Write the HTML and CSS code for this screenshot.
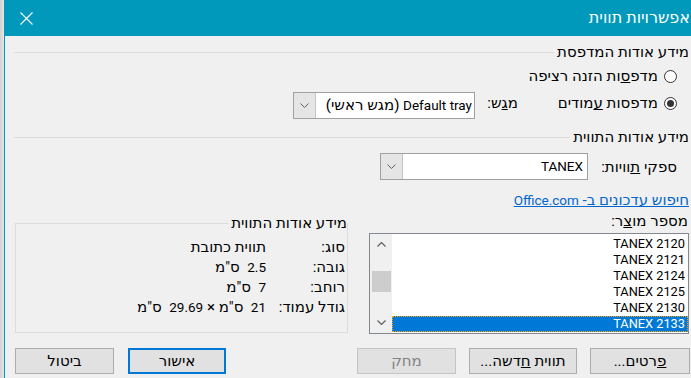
FILE: index.html
```html
<!DOCTYPE html>
<html lang="he" dir="rtl">
  <head>
    <meta charset="UTF-8" />
    <title>אפשרויות תווית</title>
    <link rel="stylesheet" href="styles.css">
  </head>
  <body>
    <div class="dialog">
      <div class="titlebar">
        <span class="title">אפשרויות תווית</span>
        <span class="close">
          <svg width="13" height="13" viewBox="0 0 13 13">
            <path d="M0.5 0.5 L12.5 12.5 M12.5 0.5 L0.5 12.5" stroke="#fff" stroke-width="1.1" fill="none" />
          </svg>
        </span>
      </div>

      <div class="content">
        <div class="section-head">
          <span>מידע אודות המדפסת</span>
          <span class="rule"></span>
        </div>

        <div class="radio-row">
          <span class="radio"></span>
          <span>מדפ<u>ס</u>ות הזנה רציפה</span>
        </div>

        <div class="tray-row">
          <div class="radio-opt">
            <span class="radio checked"></span>
            <span>מדפסות <u>ע</u>מודים</span>
          </div>
          <span class="tray-label">מ<u>ג</u>ש:</span>
          <div class="combo tray-combo">
            <span class="combo-text"><span class="latin">Default tray</span> (מגש ראשי)</span>
            <span class="combo-btn">
              <svg width="9" height="5" viewBox="0 0 9 5"><path d="M0.5 0.5 L4.5 4.5 L8.5 0.5" stroke="#606060" fill="none" /></svg>
            </span>
          </div>
        </div>

        <div class="section-head second">
          <span>מידע אודות התווית</span>
          <span class="rule"></span>
        </div>

        <div class="vendor-row">
          <span class="vendor-label">ספקי <u>ת</u>וויות:</span>
          <div class="combo vendor-combo">
            <span class="combo-text latin">TANEX</span>
            <span class="combo-btn">
              <svg width="9" height="5" viewBox="0 0 9 5"><path d="M0.5 0.5 L4.5 4.5 L8.5 0.5" stroke="#606060" fill="none" /></svg>
            </span>
          </div>
        </div>

        <div class="link-row">
          <a href="#">חיפוש עדכונים ב- <span class="latin">Office.com</span></a>
        </div>

        <div class="lower">
          <div class="product">
            <div class="product-label">מספר מו<u>צ</u>ר:</div>
            <div class="listbox">
              <div class="items">
                <div class="item">TANEX 2120</div>
                <div class="item">TANEX 2121</div>
                <div class="item">TANEX 2124</div>
                <div class="item">TANEX 2125</div>
                <div class="item">TANEX 2130</div>
                <div class="item selected">TANEX 2133</div>
              </div>
              <div class="scrollbar">
                <span class="arrow">
                  <svg width="9" height="5" viewBox="0 0 9 5"><path d="M0.5 4.5 L4.5 0.5 L8.5 4.5" stroke="#606060" stroke-width="1.2" fill="none" /></svg>
                </span>
                <span class="thumb"></span>
                <span class="arrow down">
                  <svg width="9" height="5" viewBox="0 0 9 5"><path d="M0.5 0.5 L4.5 4.5 L8.5 0.5" stroke="#606060" stroke-width="1.2" fill="none" /></svg>
                </span>
              </div>
            </div>
          </div>

          <fieldset class="info">
            <legend>מידע אודות התווית</legend>
            <div class="info-grid">
              <span>סוג:</span><span>תווית כתובת</span>
              <span>גובה:</span><span><span class="latin">2.5</span>&nbsp; ס"מ</span>
              <span>רוחב:</span><span><span class="latin">7</span>&nbsp; ס"מ</span>
              <span>גודל עמוד:</span><span><span class="latin">21</span>&nbsp; ס"מ × <span class="latin">29.69</span>&nbsp; ס"מ</span>
            </div>
          </fieldset>
        </div>

        <div class="buttons">
          <div class="btn-group right">
            <button class="details"><u>פ</u>רטים...</button>
            <button class="new-label">תווית <u>ח</u>דשה...</button>
            <button class="delete" disabled>מחק</button>
          </div>
          <div class="btn-group left">
            <button class="ok default">אישור</button>
            <button class="cancel">ביטול</button>
          </div>
        </div>
      </div>
    </div>
  </body>
</html>
```

FILE: styles.css
```css
* {
  box-sizing: border-box;
}

body {
  margin: 0;
  background: linear-gradient(to right, #d0d0d0, #e6e6e6 4px);
  font-family: Roboto, "DejaVu Sans", sans-serif;
  font-size: 15px;
  line-height: 16px;
  color: #000;
  overflow: hidden;
}

.latin {
  font-size: 13.5px;
}

.dialog {
  margin-left: 4px;
  width: 687px;
  height: 378px;
  border-left: 1px solid #0099bc;
  background: #f0f0f0;
  overflow: hidden;
}

.titlebar {
  height: 36px;
  background: #0099bc;
  color: #fff;
  font-size: 16px;
  display: flex;
  align-items: center;
  justify-content: space-between;
}

.title {
  margin-right: 1px;
}

.close {
  display: flex;
  margin-left: 15px;
}

.content {
  padding: 8px 2px 0 10px;
}

.section-head {
  display: flex;
  align-items: center;
  height: 16px;
}

.section-head.second {
  margin-top: 10px;
}

.section-head .rule {
  flex: 1;
  height: 1px;
  background: #dcdcdc;
  margin-right: 3px;
  margin-left: -1px;
}

.radio-row,
.radio-opt {
  display: flex;
  align-items: center;
  gap: 6px;
  height: 16px;
}

.radio-row {
  margin: 8px 12px 0 0;
}

.radio {
  width: 13px;
  height: 13px;
  border: 1px solid #333;
  border-radius: 50%;
  background: #fff;
  display: flex;
  align-items: center;
  justify-content: center;
}

.radio.checked::after {
  content: "";
  width: 7px;
  height: 7px;
  border-radius: 50%;
  background: #333;
}

.tray-row {
  display: flex;
  align-items: flex-start;
  height: 27px;
  margin: 8px 12px 0 0;
}

.radio-opt {
  width: 159px;
  margin-top: 3px;
}

.tray-label {
  width: 43px;
  margin-top: 3px;
}

.combo {
  display: flex;
  height: 27px;
  border: 1px solid #a0a0a0;
  background: #fff;
}

.tray-combo {
  width: 182px;
}

.vendor-combo {
  width: 208px;
}

.combo-text {
  flex: 1;
  padding-right: 2px;
  line-height: 25px;
  white-space: nowrap;
  overflow: hidden;
}

.vendor-combo .combo-text {
  padding-right: 4px;
}

.combo-btn {
  width: 22px;
  background: #e5e5e5;
  border-right: 1px solid #c4c4c4;
  display: flex;
  align-items: center;
  justify-content: center;
}

.vendor-row {
  display: flex;
  align-items: center;
  height: 27px;
  margin: 8px 12px 0 0;
}

.vendor-label {
  width: 89px;
}

.link-row {
  margin-top: 12px;
  height: 16px;
}

.link-row a {
  color: #0066cc;
  text-decoration: underline;
}

.lower {
  display: flex;
  justify-content: space-between;
  align-items: flex-start;
  margin-top: 5px;
}

.product {
  width: 320px;
}

.product-label {
  height: 16px;
  padding-right: 1px;
}

.listbox {
  margin-top: 4px;
  height: 101px;
  border: 1px solid #828790;
  background: #fff;
  display: flex;
}

.items {
  flex: 1;
  padding-top: 2px;
  font-size: 12.8px;
}

.item {
  height: 16px;
  padding-right: 3px;
}

.item.selected {
  background: #0078d7;
  color: #fff;
  outline: 1px dotted #ffa200;
  outline-offset: -1px;
}

.scrollbar {
  width: 22px;
  background: #f0f0f0;
  display: flex;
  flex-direction: column;
}

.arrow {
  height: 21px;
  display: flex;
  align-items: center;
  justify-content: center;
}

.arrow.down {
  margin-top: auto;
}

.thumb {
  height: 21px;
  margin: 16px 1px 0 2px;
  background: #cdcdcd;
}

.info {
  width: 333px;
  height: 118px;
  margin: 2px 0 0 0;
  padding: 0;
  border: 1px solid #dcdcdc;
}

.info legend {
  padding: 0 0 0 3px;
  margin: 0;
}

.info-grid {
  display: grid;
  grid-template-columns: 79px auto;
  grid-auto-rows: 20px;
  align-items: center;
  margin-top: 6px;
  padding-right: 2px;
}

.buttons {
  display: flex;
  justify-content: space-between;
  margin-top: 14px;
}

.btn-group {
  display: flex;
  gap: 13px;
}

.btn-group.right {
  margin-right: -1px;
}

.btn-group.left {
  gap: 14px;
}

button {
  height: 26px;
  width: 99px;
  padding: 0;
  font-family: inherit;
  font-size: inherit;
  color: #000;
  background: #e1e1e1;
  border: 1px solid #adadad;
}

button.details {
  width: 100px;
}

button.new-label {
  width: 108px;
}

button.ok {
  width: 98px;
}

button.default {
  border: 2px solid #0078d7;
}

button:disabled {
  color: #838383;
  background: #e1e1e1;
  border-color: #c4c4c4;
}
```
